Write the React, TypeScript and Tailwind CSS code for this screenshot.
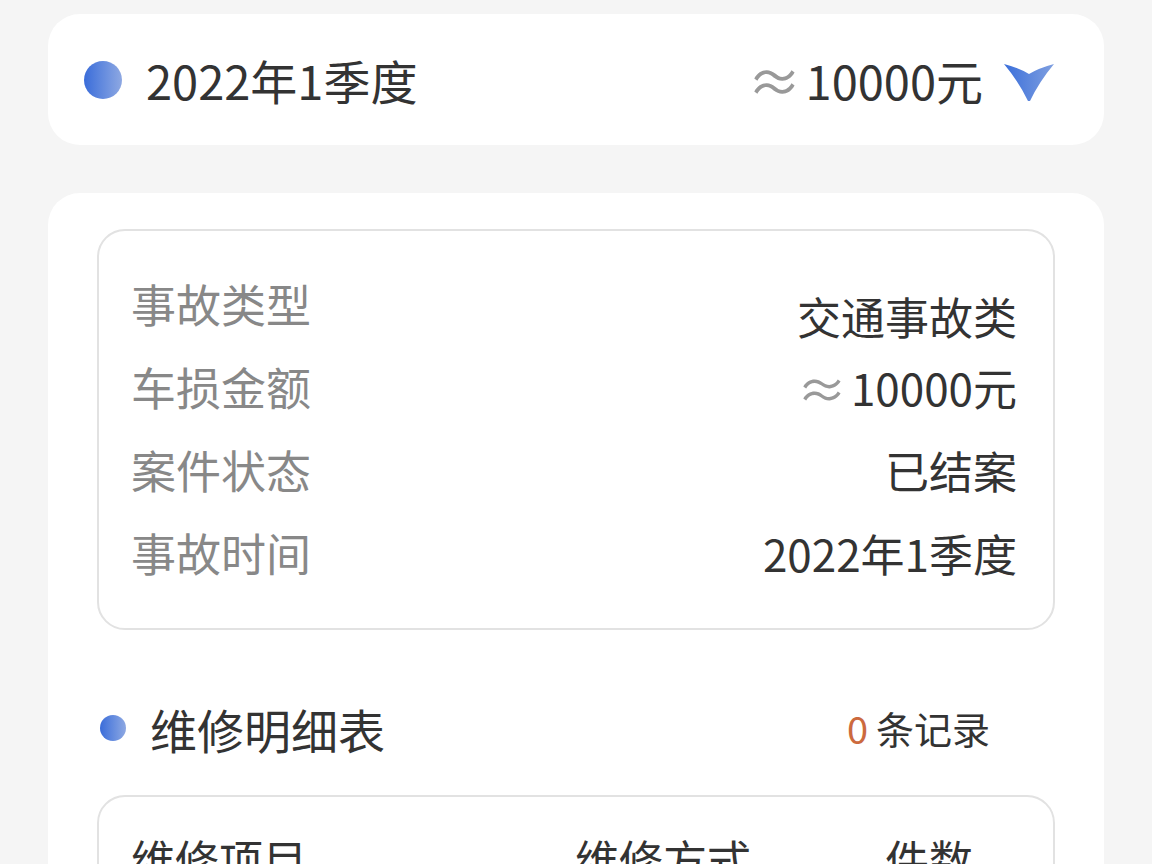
import React from 'react'

const ROWS = [
  { label: '事故类型', value: '交通事故类', approx: false },
  { label: '车损金额', value: '10000元', approx: true },
  { label: '案件状态', value: '已结案', approx: false },
  { label: '事故时间', value: '2022年1季度', approx: false },
]

const font = { fontFamily: '"Noto Sans CJK SC", "Noto Sans", sans-serif' }

function Dot({ size }: { size: string }) {
  return <span className={`${size} shrink-0 rounded-full bg-gradient-to-r from-[#3a6cd9] to-[#8ea8e2]`} />
}

function Chevron() {
  return (
    <svg width="52" height="40" viewBox="0 0 52 40">
      <defs>
        <linearGradient id="chev" x1="0" y1="0" x2="1" y2="0">
          <stop offset="0" stopColor="#3b6fda" />
          <stop offset="1" stopColor="#7f9fe0" />
        </linearGradient>
      </defs>
      <path d="M1 2 Q16 6 26 12 Q36 6 51 2 Q36 20 27 39 L25 39 Q16 20 1 2 Z" fill="url(#chev)" />
    </svg>
  )
}

export default function App() {
  return (
    <div className="min-h-screen bg-[#f5f5f5] px-12 pt-[14px] text-[#333]" style={font}>
      <div className="flex h-[131px] items-center justify-between rounded-[32px] bg-white pl-9 pr-[49px]">
        <div className="flex items-center gap-6">
          <Dot size="h-[38px] w-[38px]" />
          <span className="text-[47px] leading-none">2022年1季度</span>
        </div>
        <div className="flex items-center">
          <span className="mr-1 text-[54px] leading-none text-[#999]">≈</span>
          <span className="text-[47px] leading-none">10000元</span>
          <span className="ml-5 mt-1"><Chevron /></span>
        </div>
      </div>

      <div className="mt-12 rounded-[32px] bg-white px-[49px] pt-9 pb-10">
        <div className="rounded-[28px] border-2 border-[#e2e2e2] pl-8 pr-9 pt-[31px] pb-[34px]">
          {ROWS.map((r, i) => (
            <div key={r.label} className="flex h-[83px] items-center justify-between">
              <span className="text-[45px] leading-none text-[#888]">{r.label}</span>
              <span className={`flex items-center text-[44px] leading-none ${i === 0 ? 'mt-6' : ''}`}>
                {r.approx && <span className="mr-1 text-[50px] text-[#999]">≈</span>}
                {r.value}
              </span>
            </div>
          ))}
        </div>

        <div className="mt-[58px] flex h-20 items-center justify-between pl-[3px] pr-[65px]">
          <div className="flex items-center gap-6">
            <Dot size="h-[26px] w-[26px]" />
            <span className="text-[47px] leading-none">维修明细表</span>
          </div>
          <div className="flex items-center gap-2 text-[38px] leading-none">
            <span className="text-[#cc6a3e]">0</span>
            <span>条记录</span>
          </div>
        </div>

        <div className="mt-[27px] rounded-[28px] border-2 border-[#e2e2e2] pl-8 pr-9 pt-10 pb-8">
          <div className="flex text-[44px] leading-none">
            <span className="w-[444px]">维修项目</span>
            <span className="w-[310px]">维修方式</span>
            <span>件数</span>
          </div>
        </div>
      </div>
    </div>
  )
}
